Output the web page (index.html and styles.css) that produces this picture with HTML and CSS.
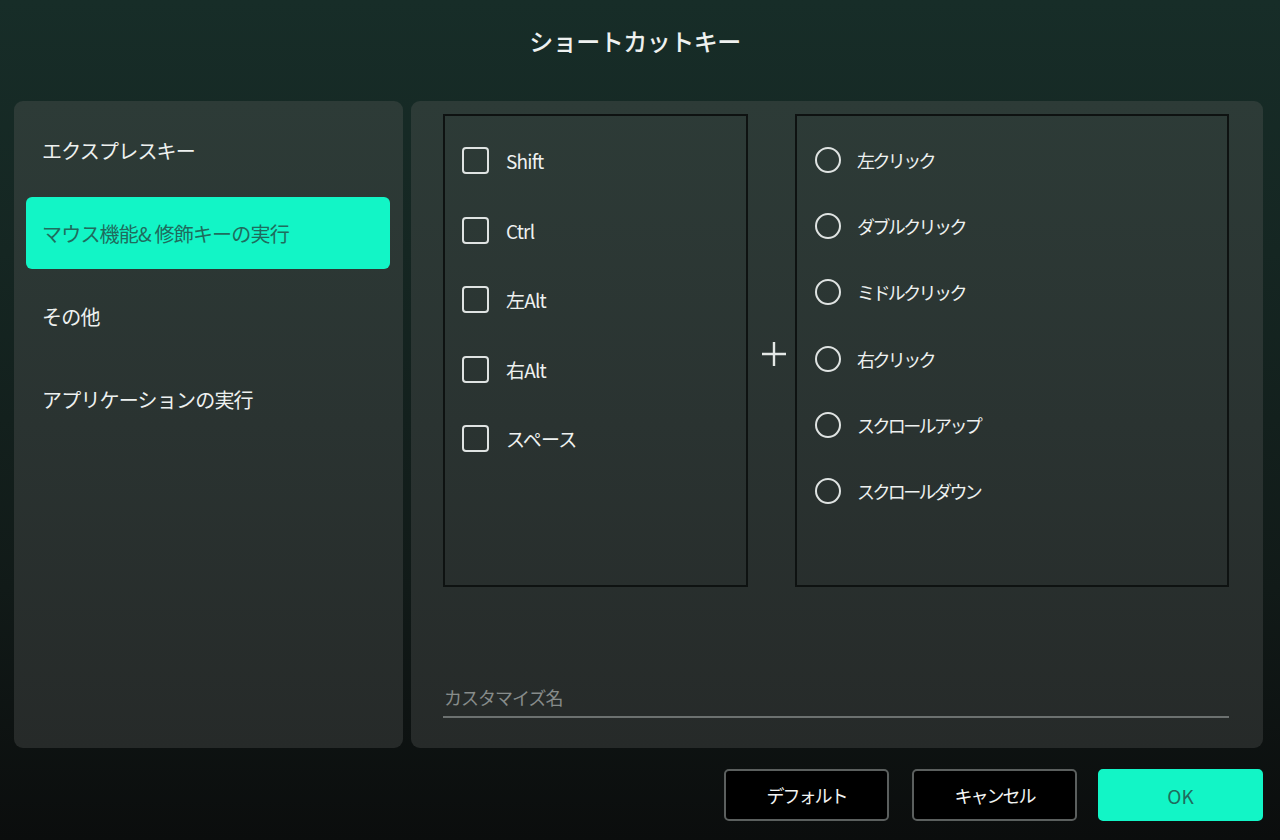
FILE: index.html
```html
<!DOCTYPE html>
<html lang="ja">
<head>
    <meta charset="UTF-8">
    <title>ショートカットキー</title>
    <link rel="stylesheet" href="styles.css">
</head>
<body>
    <div class="dialog">
        <header class="dialog-header">
            <h1>ショートカットキー</h1>
        </header>

        <div class="dialog-body">
            <nav class="sidebar">
                <div class="nav-item">エクスプレスキー</div>
                <div class="nav-item active">マウス機能&amp; 修飾キーの実行</div>
                <div class="nav-item">その他</div>
                <div class="nav-item">アプリケーションの実行</div>
            </nav>

            <section class="content">
                <div class="combo">
                    <div class="box keys">
                        <label class="check-row"><span class="checkbox"></span><span class="check-label">Shift</span></label>
                        <label class="check-row"><span class="checkbox"></span><span class="check-label">Ctrl</span></label>
                        <label class="check-row"><span class="checkbox"></span><span class="check-label">左Alt</span></label>
                        <label class="check-row"><span class="checkbox"></span><span class="check-label">右Alt</span></label>
                        <label class="check-row"><span class="checkbox"></span><span class="check-label">スペース</span></label>
                    </div>

                    <div class="plus">
                        <svg width="28" height="28" viewBox="0 0 28 28">
                            <path d="M14 2 V26 M2 14 H26" stroke="#e4e8e6" stroke-width="2.4" fill="none"/>
                        </svg>
                    </div>

                    <div class="box mouse">
                        <label class="radio-row"><span class="radio"></span><span class="radio-label">左クリック</span></label>
                        <label class="radio-row"><span class="radio"></span><span class="radio-label">ダブルクリック</span></label>
                        <label class="radio-row"><span class="radio"></span><span class="radio-label">ミドルクリック</span></label>
                        <label class="radio-row"><span class="radio"></span><span class="radio-label">右クリック</span></label>
                        <label class="radio-row"><span class="radio"></span><span class="radio-label">スクロールアップ</span></label>
                        <label class="radio-row"><span class="radio"></span><span class="radio-label">スクロールダウン</span></label>
                    </div>
                </div>

                <div class="name-field">
                    <input type="text" placeholder="カスタマイズ名">
                </div>
            </section>
        </div>

        <footer class="dialog-footer">
            <button class="btn">デフォルト</button>
            <button class="btn cancel">キャンセル</button>
            <button class="btn primary">OK</button>
        </footer>
    </div>
</body>
</html>
```

FILE: styles.css
```css
:root {
    --accent: #12f5c6;
    --accent-text: #1f6c5d;
    --text: #eef1f0;
    --muted: #878c8b;
}

* {
    box-sizing: border-box;
}

body {
    margin: 0;
    width: 1280px;
    height: 840px;
    overflow: hidden;
    font-family: "Noto Sans CJK JP", "Noto Sans", sans-serif;
    color: var(--text);
    background: linear-gradient(180deg, #172d28 0%, #152622 30%, #111a18 70%, #0b0d0d 100%);
}

.dialog {
    display: flex;
    flex-direction: column;
    height: 100%;
}

.dialog-header {
    height: 101px;
    display: flex;
    justify-content: center;
    padding: 22px 10px 0 0;
}

h1 {
    margin: 0;
    font-size: 24px;
    line-height: 38px;
    font-weight: 500;
    letter-spacing: -0.5px;
}

.dialog-body {
    display: flex;
    gap: 8px;
    height: 647px;
    padding: 0 17px 0 14px;
}

.sidebar,
.content {
    border-radius: 9px;
    background: linear-gradient(180deg, #2d3b37 0%, #2a3331 50%, #262a29 100%);
}

.sidebar {
    width: 389px;
    padding: 13px 13px 0 12px;
    display: flex;
    flex-direction: column;
    gap: 11px;
}

.nav-item {
    height: 72px;
    display: flex;
    align-items: center;
    padding-left: 16px;
    border-radius: 6px;
    font-size: 20px;
    letter-spacing: -0.8px;
}

.nav-item.active {
    background: var(--accent);
    color: var(--accent-text);
}

.content {
    flex: 1;
    display: flex;
    flex-direction: column;
    padding: 13px 34px 30px 32px;
}

.combo {
    display: flex;
    height: 473px;
}

.box {
    border: 2px solid #0e1211;
    display: flex;
    flex-direction: column;
}

.keys {
    width: 305px;
    padding: 10px 0 0 17px;
}

.mouse {
    flex: 1;
    padding: 11px 0 0 18px;
}

.plus {
    width: 47px;
    display: flex;
    align-items: center;
    justify-content: center;
    padding-top: 6px;
    padding-left: 5px;
}

.check-row {
    height: 69.5px;
    display: flex;
    align-items: center;
    gap: 17px;
}

.checkbox {
    width: 27px;
    height: 27px;
    border: 2px solid #dfe3e2;
    border-radius: 4px;
}

.check-label {
    font-size: 19px;
    letter-spacing: -0.8px;
}

.radio-row {
    height: 66.2px;
    display: flex;
    align-items: center;
    gap: 16px;
}

.radio {
    width: 26px;
    height: 26px;
    border: 2px solid #dfe3e2;
    border-radius: 50%;
}

.radio-label {
    font-size: 18px;
    letter-spacing: -2.6px;
}

.name-field {
    margin-top: auto;
}

.name-field input {
    width: 100%;
    background: transparent;
    border: none;
    border-bottom: 2px solid #6c7170;
    padding: 0 0 6px 1px;
    font-family: inherit;
    font-size: 18px;
    letter-spacing: -1px;
    color: var(--text);
    outline: none;
}

.name-field input::placeholder {
    color: var(--muted);
}

.dialog-footer {
    display: flex;
    justify-content: flex-end;
    padding: 21px 17px 0 0;
}

.btn {
    width: 165px;
    height: 52px;
    background: #000;
    color: #f2f4f3;
    border: 2px solid #5b5f5e;
    border-radius: 5px;
    font-family: inherit;
    font-size: 18px;
    letter-spacing: -2px;
}

.btn.cancel {
    margin-left: 23px;
}

.btn.primary {
    margin-left: 21px;
    background: var(--accent);
    border-color: var(--accent);
    color: var(--accent-text);
    letter-spacing: 0;
    font-size: 19px;
}
```
